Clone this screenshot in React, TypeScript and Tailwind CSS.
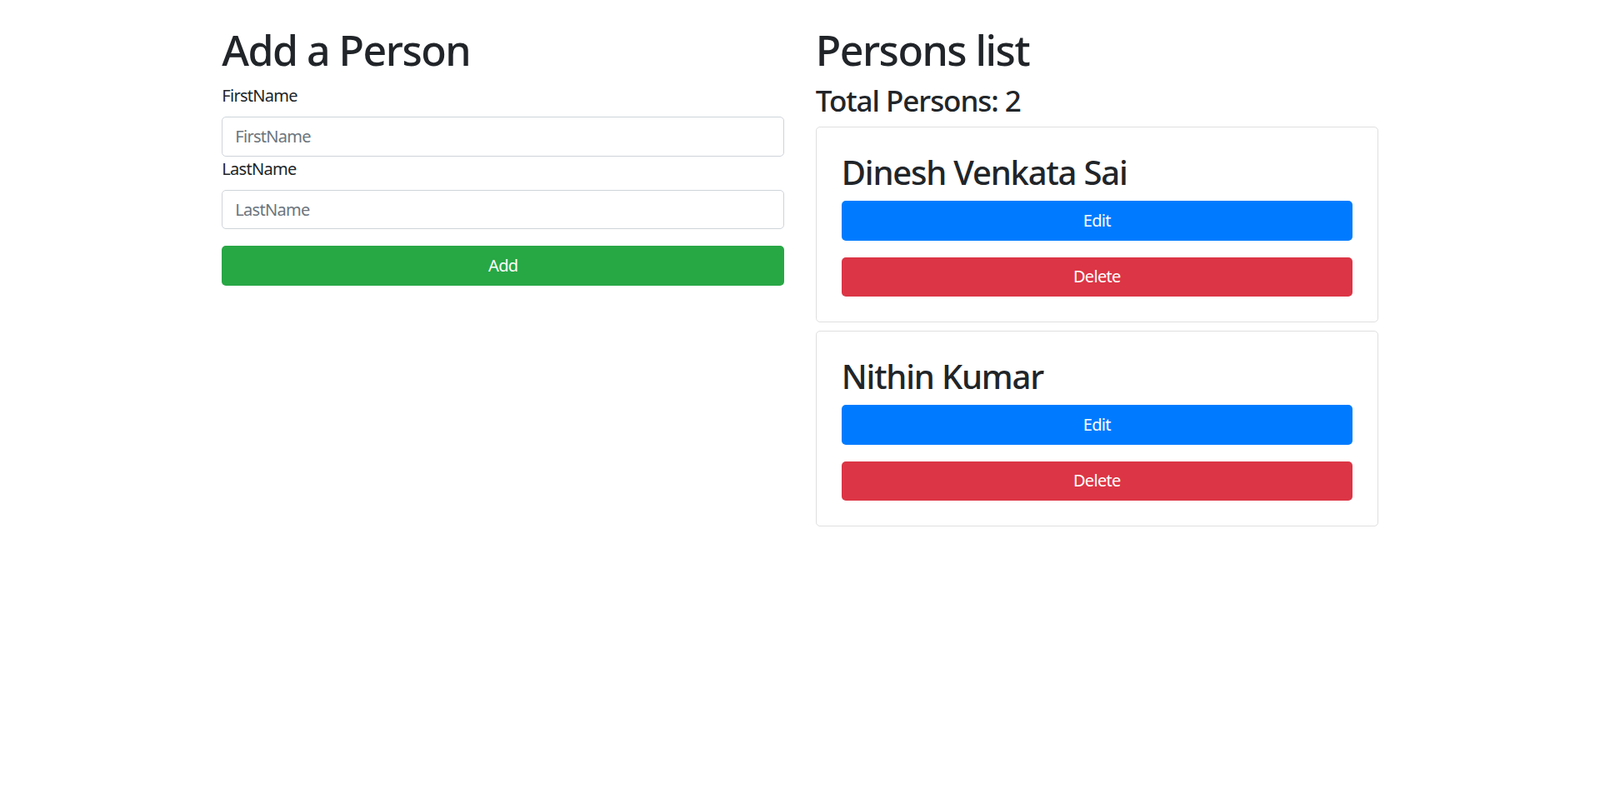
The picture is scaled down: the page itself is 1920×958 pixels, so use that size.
import { useState } from "react";

interface Person {
    id: number;
    firstName: string;
    lastName: string;
}

const font = { fontFamily: '"Noto Sans", "Open Sans", Arial, sans-serif' };

export default function App() {
    const [persons] = useState<Person[]>([
        { id: 1, firstName: "Dinesh", lastName: "Venkata Sai" },
        { id: 2, firstName: "Nithin", lastName: "Kumar" },
    ]);

    return (
        <div className="min-h-screen bg-white text-[#212529] pt-[30px]" style={font}>
            <div className="mx-auto flex w-[1387.5px] gap-[37.5px]">
                {/* left: form */}
                <div className="w-[675px] shrink-0">
                    <h1 className="mb-[10px] text-[50px] leading-[60px] font-medium tracking-[-0.03em]">Add a Person</h1>
                    <form onSubmit={(e) => e.preventDefault()}>
                        <label htmlFor="firstName" className="mb-[10px] block text-[20px] leading-[30px] tracking-[-0.035em]">
                            FirstName
                        </label>
                        <input
                            id="firstName"
                            type="text"
                            placeholder="FirstName"
                            className="block h-[47.5px] w-full rounded-[5px] border border-[#ced4da] px-[15px] text-[20px] leading-[30px] tracking-[-0.035em] placeholder:text-[#6c757d] focus:outline-none"
                        />
                        <label htmlFor="lastName" className="mb-[10px] block text-[20px] leading-[30px] tracking-[-0.035em]">
                            LastName
                        </label>
                        <input
                            id="lastName"
                            type="text"
                            placeholder="LastName"
                            className="block h-[47.5px] w-full rounded-[5px] border border-[#ced4da] px-[15px] text-[20px] leading-[30px] tracking-[-0.035em] placeholder:text-[#6c757d] focus:outline-none"
                        />
                        <button
                            type="submit"
                            className="mt-[20px] block h-[47.5px] w-full rounded-[5px] bg-[#28a745] text-[20px] leading-[30px] tracking-[-0.035em] text-white"
                        >
                            Add
                        </button>
                    </form>
                </div>

                {/* right: list */}
                <div className="w-[675px] shrink-0">
                    <h1 className="mb-[10px] text-[50px] leading-[60px] font-medium tracking-[-0.03em]">Persons list</h1>
                    <h3 className="mb-[10px] text-[35px] leading-[42px] font-medium tracking-[-0.03em]">
                        Total Persons: {persons.length}
                    </h3>
                    {persons.map((p) => (
                        <div key={p.id} className="mb-[10px] rounded-[5px] border border-black/[0.125]">
                            <div className="p-[30px]">
                                <h2 className="mb-[10px] text-[40px] leading-[48px] font-medium tracking-[-0.03em]">
                                    {p.firstName} {p.lastName}
                                </h2>
                                <button className="mb-[20px] block h-[47.5px] w-full rounded-[5px] bg-[#007bff] text-[20px] leading-[30px] tracking-[-0.035em] text-white">
                                    Edit
                                </button>
                                <button className="block h-[47.5px] w-full rounded-[5px] bg-[#dc3545] text-[20px] leading-[30px] tracking-[-0.035em] text-white">
                                    Delete
                                </button>
                            </div>
                        </div>
                    ))}
                </div>
            </div>
        </div>
    );
}
